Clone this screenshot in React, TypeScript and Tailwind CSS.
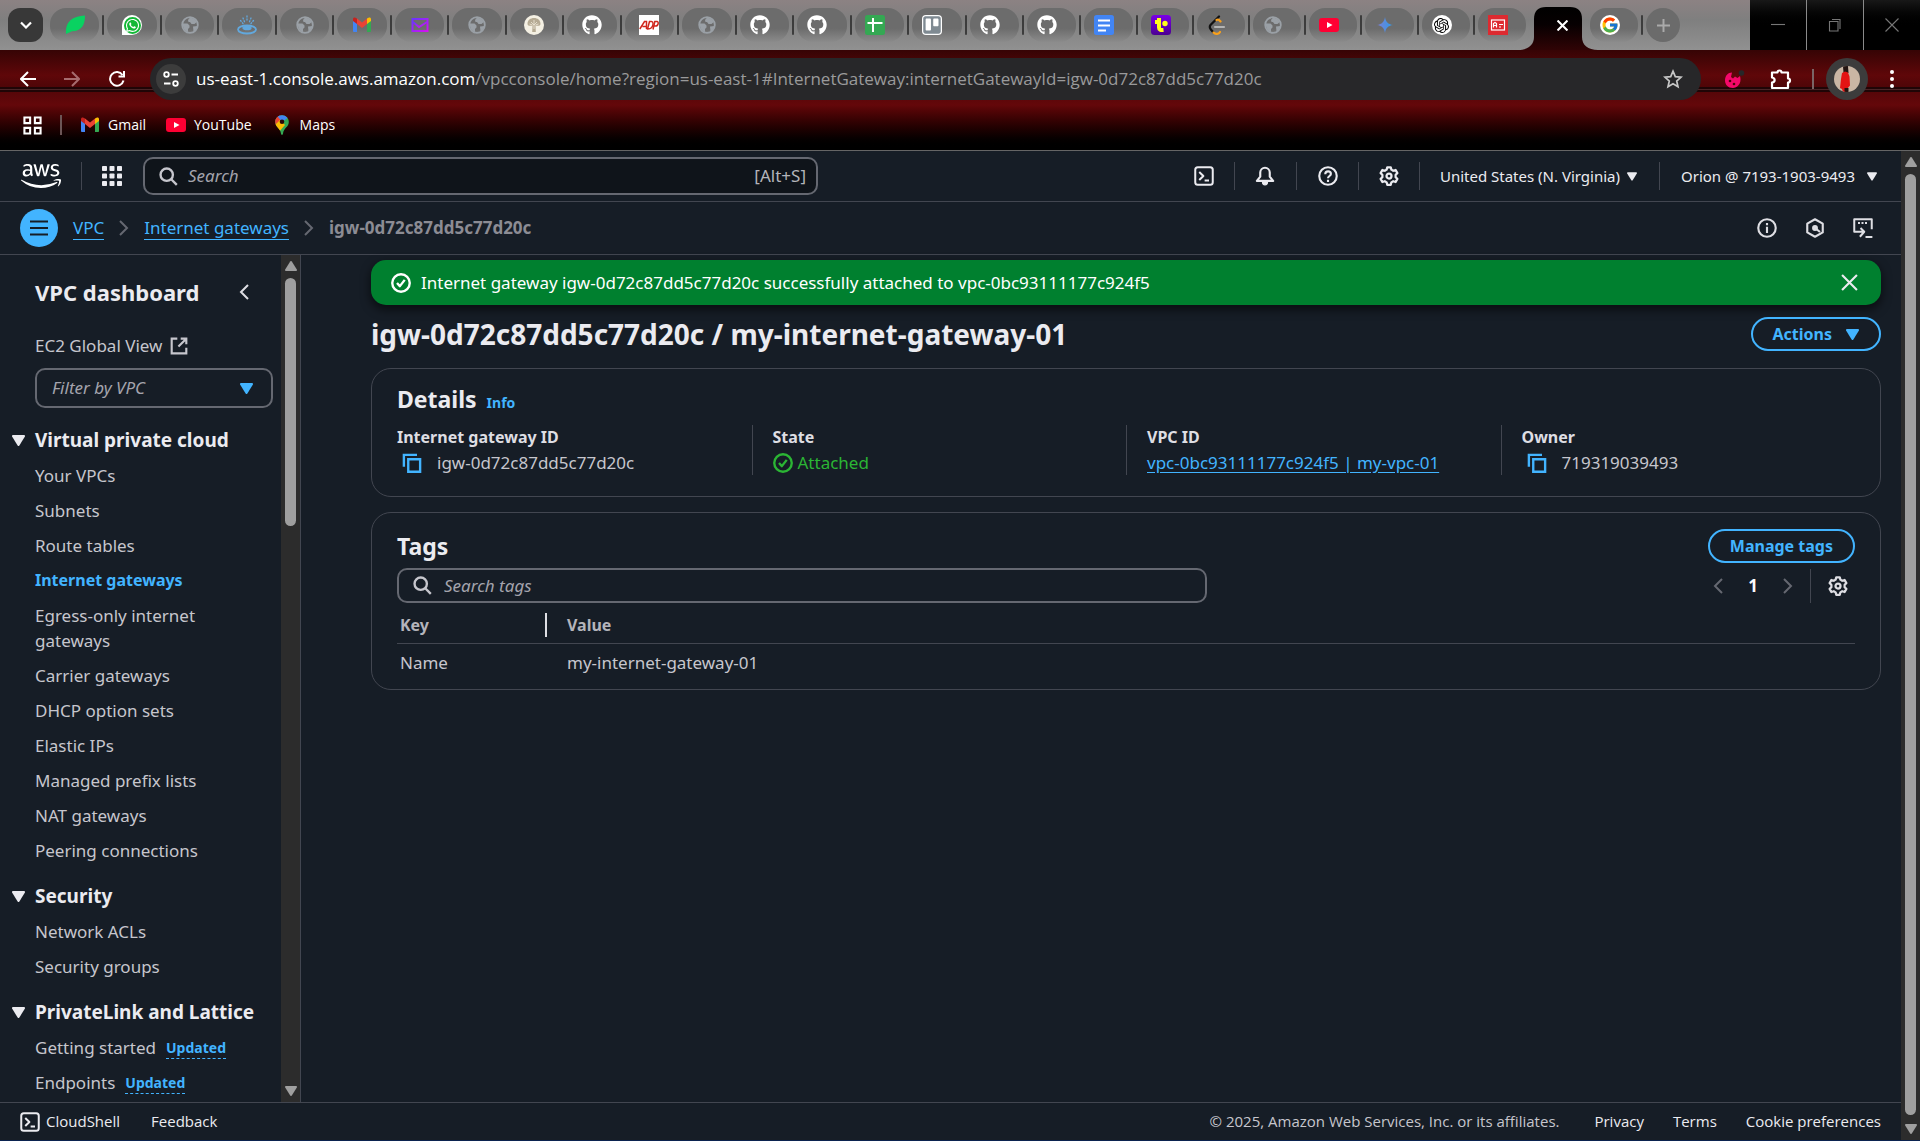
import React from "react";
import { FaGithub, FaWhatsapp, FaAws, FaTrello } from "react-icons/fa";
import { FcGoogle } from "react-icons/fc";
import { SiOpenai } from "react-icons/si";

type IconProps = { className?: string };

/* ---------- favicons ---------- */

const Globe = () => (
  <svg viewBox="0 0 20 20" className="size-5">
    <circle cx="10" cy="10" r="7.8" fill="none" stroke="#9aa0a6" strokeWidth="1.8" />
    <path d="M3 8.5h4.5l2 2v2l-1.500 1.500v3C5 16.500 2.500 13 3 8.500zM10 2.500c3 .2 5.500 1.800 6.800 4.500l-2.300 2h-3l-1.500-2H8.500L8 5z" fill="#9aa0a6" />
    <path d="M13 11.500l4.500-.5c-.4 2.800-2 4.800-4 5.800z" fill="#9aa0a6" />
  </svg>
);
const Leaf = () => (
  <svg viewBox="0 0 20 20" className="size-5">
    <path d="M1 19C.5 9 4 1.500 20 .5c0 9-3 15.500-13 15.800L1 19z" fill="#09d261" />
  </svg>
);
const WhatsApp = () => (
  <span className="flex size-5 items-center justify-center rounded-full rounded-bl-sm bg-white">
    <span className="flex size-[17px] items-center justify-center rounded-full bg-[#12b836]">
      <FaWhatsapp className="size-[15px] text-white" />
    </span>
  </span>
);
const Java = () => (
  <svg viewBox="0 0 20 20" className="size-5" fill="none" stroke="#62a8dd" strokeWidth="1.300" strokeLinecap="round">
    <path d="M10 1v6M6 3l2 5M14 3l-2 5M3.500 5.500L6 8.500M16.500 5.500L14 8.500" strokeDasharray="1 2" />
    <ellipse cx="10" cy="14.500" rx="9" ry="4" strokeWidth="1.800" />
    <ellipse cx="10" cy="13" rx="4" ry="1.700" fill="#62a8dd" />
  </svg>
);
const Gmail = ({ className = "size-5" }: IconProps) => (
  <svg viewBox="0 0 20 20" className={className}>
    <path d="M1 17V5l4 3v9H2.200C1.500 17 1 16.600 1 17z" fill="#4285f4" />
    <path d="M19 17V5l-4 3v9h3c.6 0 1-.4 1 0z" fill="#34a853" />
    <path d="M15 3.500l2-1c1-.3 2 .3 2 1.500v2l-4 3z" fill="#fbbc04" />
    <path d="M5 3.500l5 4 5-4V9l-5 4-5-4z" fill="#ea4335" />
    <path d="M1 6V4c0-1.200 1-1.800 2-1.500l2 1V9z" fill="#c5221f" />
  </svg>
);
const PurpleMail = () => (
  <svg viewBox="0 0 20 20" className="size-5" fill="none">
    <defs>
      <linearGradient id="pm" x1="0" y1="0" x2="1" y2="1">
        <stop offset="0" stopColor="#6a35ff" />
        <stop offset="1" stopColor="#d411f0" />
      </linearGradient>
    </defs>
    <rect x="2.500" y="4" width="15" height="12" stroke="url(#pm)" strokeWidth="2" />
    <path d="M3 7l6 5 8-5" stroke="url(#pm)" strokeWidth="2" />
  </svg>
);
const Tree = () => (
  <svg viewBox="0 0 20 20" className="size-5">
    <circle cx="10" cy="10" r="10" fill="#f4f0e3" />
    <path d="M3.500 9c0-4 3-6 6.500-6s6.500 2 6.500 6c0 2-3 2-5 1.500l.3 6.500H8.200l.3-6.500C6.500 11 3.500 11 3.500 9z" fill="#b5aa93" />
    <path d="M10 5v9M7 7l3 3 3-3M5.500 9l3 1M14.500 9l-3 1" stroke="#efe9d8" strokeWidth=".8" fill="none" />
  </svg>
);
const GitHub = () => <FaGithub className="size-5 text-white" />;
const Adp = () => (
  <svg viewBox="0 0 20 20" className="size-5">
    <rect width="20" height="20" fill="#fff" />
    <g fill="none" stroke="#d0271d" strokeWidth="1.500">
      <path d="M.8 14L5.500 6.500h2V14M3.500 11.500h4" />
      <path d="M8.500 14L10.500 6.500h2c2 0 2 3.500.5 5.500-.7 1.300-1.800 2-4.500 2z" />
      <path d="M14 14.500L15.800 6.500h2.200c2 0 1.500 4.500-1.500 4.500h-2" />
    </g>
  </svg>
);
const Sheets = () => (
  <svg viewBox="0 0 20 20" className="size-5">
    <rect width="20" height="20" rx="2.500" fill="#34a853" />
    <path d="M8 3v14M2.500 8h15" stroke="#fff" strokeWidth="2" />
  </svg>
);
const Trello = () => <FaTrello className="size-5 rounded-sm bg-white text-[#7f8a92]" />;
const Docs = () => (
  <svg viewBox="0 0 20 20" className="size-5">
    <rect width="20" height="20" rx="2.500" fill="#4285f4" />
    <path d="M4 5.500h12M4 10.500h12M4 15.500h8" stroke="#fff" strokeWidth="2.200" />
  </svg>
);
const TPurple = () => (
  <svg viewBox="0 0 20 20" className="size-5">
    <defs>
      <linearGradient id="tp" x1="0" y1="0" x2="0" y2="1">
        <stop offset="0" stopColor="#7a00e6" />
        <stop offset="1" stopColor="#4b0092" />
      </linearGradient>
    </defs>
    <rect width="20" height="20" rx="3.500" fill="url(#tp)" />
    <path d="M8 3v9.500c0 2.300 1.500 2.800 4.500 2.500M4 7h6" stroke="#ffff19" strokeWidth="4" fill="none" />
    <circle cx="14" cy="8.500" r="2.700" fill="#ffff19" />
  </svg>
);
const LeetCode = () => (
  <svg viewBox="0 0 20 20" className="size-5" fill="none" strokeLinecap="round" strokeWidth="2.200">
    <path d="M12 1.500L3.500 10c-1 1.300-1 2.500 0 4L6 17" stroke="#111" />
    <path d="M6.500 17.500c2 2 5 2 6.500-.5M9.500 5c1.500-.8 2.800 0 4 1.500" stroke="#f9a01b" />
    <path d="M8 12h9" stroke="#b3b3b3" />
  </svg>
);
const YouTube = () => (
  <svg viewBox="0 0 20 20" className="size-5">
    <rect y="3" width="20" height="14" rx="3" fill="#ff0033" />
    <path d="M8 7l5.500 3L8 13z" fill="#fff" />
  </svg>
);
const Gemini = () => (
  <svg viewBox="0 0 20 20" className="size-5">
    <defs>
      <linearGradient id="gm" x1="0" y1="0" x2="1" y2="0">
        <stop offset="0" stopColor="#7b7fd6" />
        <stop offset="1" stopColor="#2f9be8" />
      </linearGradient>
    </defs>
    <path d="M10 2c.8 5 3 7.200 8 8-5 .8-7.200 3-8 8-.8-5-3-7.200-8-8 5-.8 7.200-3 8-8z" fill="url(#gm)" />
  </svg>
);
const OpenAI = () => (
  <span className="flex size-5 items-center justify-center rounded-full bg-white">
    <SiOpenai className="size-[15px] text-black" />
  </span>
);
const RedCard = () => (
  <svg viewBox="0 0 20 20" className="size-5" fill="none" stroke="#fff" strokeWidth="1.200">
    <rect width="20" height="20" fill="#dd2a30" stroke="none" />
    <rect x="3.500" y="5" width="13" height="10" />
    <path d="M5.500 12.500v-4l1.500-1 1.500 1v4M5.500 10.500h3M11 9.500h4M11 12h2" />
  </svg>
);
const Google = () => (
  <span className="flex size-5 items-center justify-center rounded-full bg-white">
    <FcGoogle className="size-[18px]" />
  </span>
);

const centredTabs = [
  ["Leaf", Leaf], ["WhatsApp", WhatsApp], ["Site", Globe], ["Java", Java], ["Site", Globe], ["Gmail", Gmail],
  ["Mail", PurpleMail], ["Site", Globe], ["Tree", Tree], ["GitHub", GitHub], ["ADP", Adp], ["Site", Globe],
] as const;
const leftTabs = [
  ["GitHub", GitHub], ["GitHub", GitHub], ["Sheets", Sheets], ["Trello", Trello], ["GitHub", GitHub], ["GitHub", GitHub],
] as const;
const narrowTabs = [
  ["Docs", Docs], ["T", TPurple], ["LeetCode", LeetCode], ["Site", Globe], ["YouTube", YouTube], ["Gemini", Gemini],
  ["ChatGPT", OpenAI], ["Card", RedCard],
] as const;

/* ---------- interface icons ---------- */

const Stroke = ({ className = "size-5", width = 2, children }: IconProps & { width?: number; children: React.ReactNode }) => (
  <svg viewBox="0 0 16 16" className={className} fill="none" stroke="currentColor" strokeWidth={width} strokeLinejoin="round">
    {children}
  </svg>
);
const SearchIcon = ({ className }: IconProps) => (
  <Stroke className={className}>
    <circle cx="6.500" cy="6.500" r="5.200" />
    <path d="M10.300 10.300L15 15" />
  </Stroke>
);
const ShellIcon = ({ className }: IconProps) => (
  <Stroke className={className} width={1.6}>
    <rect x="1" y="1" width="14" height="14" rx="2" />
    <path d="M4.200 4.800L7.500 8l-3.300 3.200M8.500 11.500H12" />
  </Stroke>
);
const BellIcon = () => (
  <Stroke width={1.7}>
    <path d="M4.200 8.500V5.200a3.800 3.800 0 0 1 7.600 0v3.300l2.700 3.400h-13z" />
    <path d="M6 13h4c0 1.500-.8 2-2 2s-2-.5-2-2z" fill="currentColor" strokeWidth="1" />
  </Stroke>
);
const HelpIcon = () => (
  <Stroke width={1.7}>
    <circle cx="8" cy="8" r="7" />
    <path d="M5.800 6.500c0-3 4.500-2.800 4.500-.2C10.300 8 8 8 8 9.800M8 11v1.700" />
  </Stroke>
);
const GearIcon = () => (
  <Stroke width={1.8}>
    <path d="M6.600 1h2.800l.5 1.900 1.500.9 1.900-.6 1.400 2.500L13.300 7v2l1.400 1.300-1.400 2.500-1.900-.6-1.500.9-.5 1.900H6.600l-.5-1.900-1.500-.9-1.900.6-1.400-2.500L2.700 9V7L1.300 5.700l1.400-2.500 1.900.6 1.500-.9z" />
    <circle cx="8" cy="8" r="2" />
  </Stroke>
);
const InfoIcon = () => (
  <Stroke width={1.7}>
    <circle cx="8" cy="8" r="7" />
    <path d="M8 7v5M8 4v1.700" />
  </Stroke>
);
const HexIcon = () => (
  <Stroke width={1.7}>
    <path d="M8 1l6.200 3.500v7L8 15l-6.200-3.500v-7z" />
    <circle cx="8" cy="8" r="1.500" fill="currentColor" />
    <path d="M8 8l4 3.200" />
  </Stroke>
);
const TerminalIcon = () => (
  <Stroke width={1.6}>
    <path d="M5 11H1V1h14v8M10 15.200h5.500M4 11h4M6 8l3 3-3.500 4" />
    <path d="M4 4h8" strokeDasharray="1.600 1.200" />
  </Stroke>
);
const CheckCircle = () => (
  <Stroke width={1.9}>
    <circle cx="8" cy="8" r="7" />
    <path d="M4.800 8l2.300 2.500L11 5.500" />
  </Stroke>
);
const CopyIcon = () => (
  <Stroke className="size-5 text-[#42b4ff]" width={1.9}>
    <path d="M1.500 11V1.500H12" strokeLinejoin="miter" />
    <path d="M5 5h9.500v10H5z" strokeLinejoin="miter" />
  </Stroke>
);
const ChevronRight = ({ className = "" }: IconProps) => (
  <svg viewBox="0 0 10 16" className={`h-4 w-[10px] shrink-0 ${className}`} fill="none" stroke="currentColor" strokeWidth="2">
    <path d="M1 1l7 7-7 7" />
  </svg>
);
const ChevronLeft = ({ className = "" }: IconProps) => (
  <svg viewBox="0 0 10 16" className={`h-4 w-[10px] shrink-0 ${className}`} fill="none" stroke="currentColor" strokeWidth="2">
    <path d="M9 1L2 8l7 7" />
  </svg>
);
const Caret = ({ className = "h-[10px] w-3" }: IconProps) => (
  <svg viewBox="0 0 12 10" className={`shrink-0 ${className}`} fill="currentColor">
    <path d="M1 0h10a1 1 0 0 1 .8 1.500L6.800 9.500a1 1 0 0 1-1.600 0L.2 1.500A1 1 0 0 1 1 0z" />
  </svg>
);

/* ---------- browser frame ---------- */

const tabShape =
  "flex h-[34px] min-w-0 flex-1 items-center rounded-2xl bg-linear-to-b from-[#6c6c6c] from-60% to-[#8b8b8b]";

const Tab = ({ name, centred, last, children }: { name: string; centred?: boolean; last?: boolean; children: React.ReactNode }) => (
  <div className="flex min-w-0 flex-1 items-center">
    <button aria-label={name} className={`${tabShape} ${centred ? "justify-center" : "pl-[10px]"}`}>
      {children}
    </button>
    <span className={`mx-[3px] h-5 w-[2px] rounded-full ${last ? "bg-transparent" : "bg-[#3c3c3c]"}`} />
  </div>
);

const TabStrip = () => (
  <div className="flex h-[50px] bg-linear-to-b from-[#8c8283] via-[#7f7f7f] via-40% to-[#919191]">
    <div className="flex min-w-0 flex-1 items-center pl-2">
      <button aria-label="Search tabs" className="mr-[7px] flex h-[34px] w-[35px] shrink-0 items-center justify-center rounded-xl bg-[#383838]">
        <svg viewBox="0 0 12 8" className="h-2 w-3" fill="none" stroke="#fff" strokeWidth="2.200">
          <path d="M1 1.500l5 5 5-5" />
        </svg>
      </button>
      <div className="flex min-w-0 flex-[23]">
        {centredTabs.map(([name, Icon], i) => (
          <Tab key={i} name={name} centred>
            <Icon />
          </Tab>
        ))}
        {leftTabs.map(([name, Icon], i) => (
          <Tab key={i} name={name}>
            <Icon />
          </Tab>
        ))}
      </div>
      <div className="flex min-w-0 flex-[10]">
        {narrowTabs.map(([name, Icon], i) => (
          <Tab key={i} name={name} last={i === narrowTabs.length - 1}>
            <Icon />
          </Tab>
        ))}
      </div>
    </div>
    <div className="relative flex h-[50px] w-12 items-end pt-[7px]">
      <svg viewBox="0 0 80 43" className="absolute bottom-0 -left-4 h-[43px] w-20">
        <defs>
          <linearGradient id="at" x1="0" y1="0" x2="0" y2="1">
            <stop offset="0" stopColor="#000" />
            <stop offset=".4" stopColor="#060001" />
            <stop offset="1" stopColor="#300305" />
          </linearGradient>
        </defs>
        <path d="M0 43c10 0 16-5 16-13V12C16 4 20 0 28 0h24c8 0 12 4 12 12v18c0 8 6 13 16 13z" fill="url(#at)" />
      </svg>
      <button aria-label="Close tab" className="relative mb-[19px] ml-[23px]">
        <svg viewBox="0 0 10 10" className="size-[11px]" stroke="#fff" strokeWidth="1.900">
          <path d="M.5.5l9 9M9.500.5l-9 9" />
        </svg>
      </button>
    </div>
    <div className="flex items-center pl-2">
      <div className="flex w-14 items-center">
        <button aria-label="Google" className={`${tabShape} pl-[10px]`}>
          <Google />
        </button>
        <span className="mx-[3px] h-5 w-[2px] rounded-full bg-[#3c3c3c]" />
      </div>
      <button aria-label="New tab" className="flex size-[34px] items-center justify-center rounded-full bg-[#6b6b6b]">
        <svg viewBox="0 0 12 12" className="size-[13px]" stroke="#aaa" strokeWidth="1.800">
          <path d="M6 0v12M0 6h12" />
        </svg>
      </button>
    </div>
    <div className="ml-[70px] flex gap-px bg-[#8a8a8a] text-[#777]">
      {[
        ["Minimize", "M0 6.500h14"],
        ["Restore", "M1.500 3.500h8.500v9.500H1.500zM4 1.500h8v9.500"],
        ["Close", "M.5.5l13 13M13.500.5l-13 13"],
      ].map(([name, d]) => (
        <button key={name} aria-label={name} className="flex h-[50px] w-14 items-center justify-center bg-linear-to-b from-[#181818] to-black to-60%">
          <svg viewBox="0 0 14 14" className="size-[14px]" fill="none" stroke="currentColor" strokeWidth="1.100">
            <path d={d} />
          </svg>
        </button>
      ))}
    </div>
  </div>
);

const Toolbar = () => (
  <div className="relative h-[100px] bg-linear-to-b from-[#2d0405] via-[#64070a] via-55% to-black px-3 font-['Open_Sans','Noto_Sans',sans-serif] text-white">
    <div className="absolute inset-x-0 top-0 h-[42px] bg-linear-to-b from-[#360405] via-[#5f0709] via-60% to-[#480507]">
      <div className="absolute inset-x-0 bottom-0 h-[5px] border-y-2 border-[#1f0506] bg-[#4a2426]" />
    </div>
    <div className="relative flex h-[42px] items-center pt-4 pr-[11px]">
      <button aria-label="Back" className="flex w-8 justify-center">
        <svg viewBox="0 0 16 16" className="size-4" fill="none" stroke="currentColor" strokeWidth="2">
          <path d="M16 8H1.500M8 1L1 8l7 7" />
        </svg>
      </button>
      <button aria-label="Forward" className="ml-3 flex w-8 justify-center text-[#a66c6e]">
        <svg viewBox="0 0 16 16" className="size-4" fill="none" stroke="currentColor" strokeWidth="2">
          <path d="M0 8h14.500M8 1l7 7-7 7" />
        </svg>
      </button>
      <button aria-label="Reload" className="ml-[13px] flex w-8 justify-center">
        <svg viewBox="0 0 16 16" className="size-4" fill="none" stroke="currentColor" strokeWidth="2">
          <path d="M14.500 9.500A6.800 6.800 0 1 1 13.500 4M15 0v5.500H9.500" />
        </svg>
      </button>
      <div className="ml-[17px] flex h-[42px] min-w-0 flex-1 items-center rounded-full bg-[#272729] pr-[18px] pl-[6px]">
        <button aria-label="Site information" className="flex size-[30px] shrink-0 items-center justify-center rounded-full bg-[#3c3c3c]">
          <svg viewBox="0 0 16 16" className="size-4" fill="none" stroke="currentColor" strokeWidth="1.800">
            <circle cx="3.500" cy="3.500" r="2.300" />
            <path d="M8.500 3.500H15M1 12.500h6.500" />
            <circle cx="12.500" cy="12.500" r="2.300" />
          </svg>
        </button>
        <p className="ml-[10px] min-w-0 flex-1 truncate text-[17px] text-[#9a9a9b]">
          <span className="text-white">us-east-1.console.aws.amazon.com</span>
          /vpcconsole/home?region=us-east-1#InternetGateway:internetGatewayId=igw-0d72c87dd5c77d20c
        </p>
        <button aria-label="Bookmark" className="text-[#c7c7c7]">
          <svg viewBox="0 0 20 20" className="size-5" fill="none" stroke="currentColor" strokeWidth="1.700">
            <path d="M10 2.200l2.300 5.400 5.800.5-4.400 3.900 1.300 5.700-5-3-5 3 1.300-5.700L1.900 8.100l5.800-.5z" />
          </svg>
        </button>
      </div>
      <button aria-label="Cookie extension" className="ml-[22px]">
        <svg viewBox="0 0 22 22" className="size-[22px]">
          <path d="M9 4.500L8 9l2 1.500 2-2 2.500 1.500L17 8c1.500 5 0 11-7 12-5 0-8-3.500-8-7.500C2 7.500 5 4.500 9 4.500z" fill="#f5086a" />
          <circle cx="7" cy="13" r="1.300" fill="#4b0508" />
          <circle cx="11" cy="16" r="1.300" fill="#4b0508" />
          <circle cx="18.500" cy="5" r="2.800" fill="#272729" />
        </svg>
      </button>
      <button aria-label="Extensions" className="ml-[25px]">
        <svg viewBox="0 0 22 22" className="size-[22px]" fill="none" stroke="#fff" strokeWidth="2.200" strokeLinejoin="round">
          <path d="M2 4.500h5.500a2 2 0 0 1 4 0H18v6a2 2 0 0 1 0 4V20H2v-5.500c3.500-.5 3.500-4.500 0-5z" />
        </svg>
      </button>
      <span className="ml-5 h-5 w-[2px] bg-[#7a6566]" />
      <button aria-label="Profile" className="ml-3 flex size-[42px] items-center justify-center rounded-full bg-[#3c3c3c]">
        <svg viewBox="0 0 26 26" className="size-[26px]">
          <defs>
            <clipPath id="av"><circle cx="13" cy="13" r="13" /></clipPath>
          </defs>
          <g clipPath="url(#av)">
            <rect width="26" height="26" fill="#c9b6a4" />
            <path d="M9 0h5l.5 7h-5z" fill="#231512" />
            <path d="M8 7l3-1.500 3 1 1.500 4 .5 9-3 3.500 1 3H9l-1-3-2-1 1-9z" fill="#e31414" />
            <path d="M10.500 22h4v4h-4z" fill="#231512" />
          </g>
        </svg>
      </button>
      <button aria-label="Menu" className="ml-[19px] flex w-[10px] justify-center">
        <svg viewBox="0 0 4 18" className="h-[18px] w-1" fill="#fff">
          <circle cx="2" cy="2" r="2" /><circle cx="2" cy="9" r="2" /><circle cx="2" cy="16" r="2" />
        </svg>
      </button>
    </div>
    <div className="relative mt-2 flex h-[50px] items-center pl-[11px] text-sm">
      <button aria-label="Apps">
        <svg viewBox="0 0 20 20" className="size-[19px]" fill="none" stroke="#fff" strokeWidth="2.200">
          <path d="M1.500 1.500h6v6h-6zM12.500 1.500h6v6h-6zM1.500 12.500h6v6h-6zM12.500 12.500h6v6h-6z" />
        </svg>
      </button>
      <span className="ml-[18px] h-5 w-[2px] bg-[#6c5556]" />
      <a href="#gmail" className="ml-[18px] flex items-center gap-2"><Gmail />Gmail</a>
      <a href="#youtube" className="ml-5 flex items-center gap-2"><YouTube />YouTube</a>
      <a href="#maps" className="ml-5 flex items-center gap-2">
        <svg viewBox="0 0 20 20" className="size-5">
          <defs>
            <clipPath id="pin"><path d="M10 .3c4 0 6.800 3 6.800 6.600 0 5-5.300 6-5.800 11.800 0 1.300-2 1.300-2 0C8.500 13 3.200 11.900 3.200 6.900 3.200 3.300 6 .3 10 .3z" /></clipPath>
          </defs>
          <g clipPath="url(#pin)">
            <rect width="20" height="20" fill="#34a853" />
            <path d="M0 12L11 4l-3-4H0z" fill="#ea4335" />
            <path d="M5 0h15L10 7 6 2z" fill="#4285f4" />
            <path d="M2 11l6-6 5 5-7 8z" fill="#fbbc04" />
          </g>
          <circle cx="10" cy="6.800" r="2.300" fill="#2a0506" />
        </svg>
        Maps
      </a>
    </div>
  </div>
);

/* ---------- console ---------- */

const Divider = ({ className = "" }: IconProps) => <span className={`h-7 w-px bg-[#424650] ${className}`} />;

const AwsHeader = () => (
  <header className="flex h-[51px] items-center border-b border-[#424650] pr-6 pl-[21px] text-[#ebebf0]">
    <a href="#home" aria-label="AWS home" className="flex w-10 justify-center overflow-hidden text-white">
      <FaAws className="size-10" />
    </a>
    <Divider className="ml-5 w-[2px]" />
    <button aria-label="Services" className="ml-5">
      <svg viewBox="0 0 20 20" className="size-5" fill="currentColor">
        {[0, 7.5, 15].map((y) => [0, 7.5, 15].map((x) => <rect key={`${x}-${y}`} x={x} y={y} width="5" height="5" rx=".8" />))}
      </svg>
    </button>
    <label className="ml-[21px] flex h-[38px] w-[675px] items-center rounded-[10px] border-2 border-[#656871] bg-[#0f141a] pr-[10px] pl-[14px] text-[#b4b4bb]">
      <SearchIcon className="size-[19px] text-[#c6c6cd]" />
      <input aria-label="Search" placeholder="Search" className="ml-[10px] min-w-0 flex-1 bg-transparent outline-none placeholder:text-[#a4a4ad] placeholder:italic" />
      <span>[Alt+S]</span>
    </label>
    <div className="ml-auto flex items-center">
      <button aria-label="CloudShell"><ShellIcon className="size-5" /></button>
      <Divider className="mx-5" />
      <button aria-label="Notifications"><BellIcon /></button>
      <Divider className="mx-[21px]" />
      <button aria-label="Help"><HelpIcon /></button>
      <Divider className="mx-5" />
      <button aria-label="Settings"><GearIcon /></button>
      <Divider className="mx-5" />
      <button className="flex items-center gap-[7px] text-[15px]">United States (N. Virginia)<Caret className="h-[9px] w-[10px]" /></button>
      <Divider className="mr-[21px] ml-[22px]" />
      <button className="flex items-center gap-3 text-[15px]">Orion @ 7193-1903-9493<Caret className="h-[9px] w-[10px]" /></button>
    </div>
  </header>
);

const Breadcrumbs = () => (
  <div className="flex h-[53px] items-center border-b border-[#424650] pr-7 pl-5">
    <button aria-label="Open navigation" className="flex size-[38px] items-center justify-center rounded-full bg-[#42b4ff]">
      <svg viewBox="0 0 18 16" className="h-4 w-[18px]" stroke="#161d26" strokeWidth="2.200">
        <path d="M0 1.500h18M0 8h18M0 14.500h18" />
      </svg>
    </button>
    <nav aria-label="Breadcrumbs" className="ml-[15px] flex items-center gap-[15px]">
      <a href="#vpc" className="border-b border-[#42b4ff] leading-[22px] text-[#42b4ff]">VPC</a>
      <ChevronRight className="text-[#656871]" />
      <a href="#igws" className="border-b border-[#42b4ff] leading-[22px] text-[#42b4ff]">Internet gateways</a>
      <ChevronRight className="text-[#656871]" />
      <span className="font-bold text-[#8c8c94]">igw-0d72c87dd5c77d20c</span>
    </nav>
    <div className="ml-auto flex items-center gap-7 text-[#dedee3]">
      <button aria-label="Info"><InfoIcon /></button>
      <button aria-label="Amazon Q"><HexIcon /></button>
      <button aria-label="Open terminal"><TerminalIcon /></button>
    </div>
  </div>
);

const sections = [
  {
    title: "Virtual private cloud",
    items: ["Your VPCs", "Subnets", "Route tables", "Internet gateways", "Egress-only internet gateways", "Carrier gateways", "DHCP option sets", "Elastic IPs", "Managed prefix lists", "NAT gateways", "Peering connections"],
  },
  { title: "Security", items: ["Network ACLs", "Security groups"] },
  { title: "PrivateLink and Lattice", items: ["Getting started", "Endpoints"], updated: true },
];

const ScrollArrow = ({ up }: { up?: boolean }) => (
  <svg viewBox="0 0 12 10" className={`h-[10px] w-3 shrink-0 ${up ? "rotate-180" : ""}`} fill="#9f9f9f">
    <path d="M1 0h10a1 1 0 0 1 .8 1.500L6.800 9.500a1 1 0 0 1-1.600 0L.2 1.500A1 1 0 0 1 1 0z" />
  </svg>
);

const Sidebar = () => (
  <aside className="flex w-[301px] shrink-0 border-r border-[#424650]">
    <div className="min-w-0 flex-1 overflow-hidden pr-2 text-[#c6c6cd]">
      <div className="flex h-[74px] items-center justify-between pr-6 pl-[35px]">
        <h2 className="text-[22px] font-bold text-[#ebebf0]">VPC dashboard</h2>
        <button aria-label="Close navigation"><ChevronLeft className="text-[#dedee3]" /></button>
      </div>
      <a href="#ec2" className="mt-1 flex h-[25px] items-center gap-2 pl-[35px]">
        EC2 Global View
        <Stroke className="size-[18px]" width={1.9}>
          <path d="M6.500 1.500h-5v13h13v-5M9.500 1.500h5v5M14.500 1.500L7.500 8.500" strokeLinejoin="miter" />
        </Stroke>
      </a>
      <div className="relative mt-[10px] ml-[35px] h-10 w-[238px]">
        <select aria-label="Filter by VPC" className="size-full appearance-none rounded-[10px] border-2 border-[#656871] bg-[#161d26] pl-[15px] text-[#a4a4ad] italic">
          <option>Filter by VPC</option>
        </select>
        <Caret className="pointer-events-none absolute top-[15px] right-5 h-[11px] w-[13px] text-[#42b4ff]" />
      </div>
      <div className="mt-5 flex flex-col gap-[21px]">
        {sections.map((s) => (
          <section key={s.title}>
            <button className="flex h-[25px] items-center text-[19px] font-bold text-[#ebebf0]">
              <Caret className="mr-[10px] ml-3 h-[11px] w-[13px]" />
              {s.title}
            </button>
            <ul className="mt-[10px] flex flex-col gap-[10px] pl-[35px]">
              {s.items.map((it) => (
                <li key={it} className="flex items-center leading-[25px]">
                  <a href="#nav" className={it === "Internet gateways" ? "text-base leading-[25px] font-bold text-[#42b4ff]" : ""}>{it}</a>
                  {s.updated && (
                    <button className="ml-[10px] border-b border-dashed border-[#42b4ff] text-sm leading-[21px] font-bold text-[#42b4ff]">Updated</button>
                  )}
                </li>
              ))}
            </ul>
          </section>
        ))}
      </div>
    </div>
    <div className="flex w-[19px] shrink-0 flex-col items-center bg-[#2c2c2c] py-[6px]">
      <ScrollArrow up />
      <div className="mt-[7px] h-[248px] w-[11px] rounded-full bg-[#9f9f9f]" />
      <div className="flex-1" />
      <ScrollArrow />
    </div>
  </aside>
);

const Field = ({ label, first, children }: { label: string; first?: boolean; children: React.ReactNode }) => (
  <div className={first ? "" : "-ml-5 border-l border-[#424650] pl-5"}>
    <dt className="text-base leading-[25px] font-bold text-[#dedee3]">{label}</dt>
    <dd className="flex items-center">{children}</dd>
  </div>
);

const pill = "flex h-[34px] items-center rounded-full border-2 border-[#42b4ff] text-base font-bold text-[#42b4ff]";

const Main = () => (
  <main className="min-w-0 flex-1 pt-[5px] pr-5 pl-[70px]">
    <div role="status" className="flex h-[45px] items-center rounded-[15px] bg-[#00802f] pr-[23px] pl-5 text-white shadow-[0_4px_10px_1px_#0008]">
      <CheckCircle />
      <span className="ml-[10px]">Internet gateway igw-0d72c87dd5c77d20c successfully attached to vpc-0bc93111177c924f5</span>
      <button aria-label="Dismiss" className="ml-auto text-[#ebebf0]">
        <Stroke className="size-[17px]"><path d="M1 1l14 14M15 1L1 15" /></Stroke>
      </button>
    </div>
    <div className="mt-[10px] flex h-[38px] items-center justify-between">
      <h1 className="text-[28px] font-bold text-[#ebebf0]">igw-0d72c87dd5c77d20c / my-internet-gateway-01</h1>
      <button className={`${pill} gap-[14px] px-5`}>Actions<Caret className="h-[11px] w-[13px]" /></button>
    </div>
    <section className="mt-[15px] rounded-[20px] border border-[#424650] px-[25px] pt-[15px] pb-[21px]">
      <div className="flex h-[31px] items-baseline gap-[10px]">
        <h2 className="text-[23px] leading-[31px] font-bold text-[#ebebf0]">Details</h2>
        <a href="#info" className="text-sm font-bold text-[#42b4ff]">Info</a>
      </div>
      <dl className="mt-[10px] grid grid-cols-4 gap-10 leading-[25px] text-[#c6c6cd]">
        <Field label="Internet gateway ID" first>
          <button aria-label="Copy gateway ID" className="mr-[15px] ml-[5px]"><CopyIcon /></button>
          igw-0d72c87dd5c77d20c
        </Field>
        <Field label="State">
          <span className="flex items-center gap-[5px] text-[#2bb534]"><CheckCircle />Attached</span>
        </Field>
        <Field label="VPC ID">
          <a href="#vpc" className="text-[#42b4ff] underline underline-offset-[3px]">vpc-0bc93111177c924f5 | my-vpc-01</a>
        </Field>
        <Field label="Owner">
          <button aria-label="Copy owner" className="mr-[15px] ml-[5px]"><CopyIcon /></button>
          719319039493
        </Field>
      </dl>
    </section>
    <section className="mt-[15px] rounded-[20px] border border-[#424650] px-[25px] pt-4 pb-2">
      <div className="flex h-[34px] items-center justify-between">
        <h2 className="text-[23px] font-bold text-[#ebebf0]">Tags</h2>
        <button className={`${pill} px-5`}>Manage tags</button>
      </div>
      <div className="mt-[5px] flex h-[35px] items-center justify-between">
        <label className="flex h-[35px] w-[810px] items-center rounded-[10px] border-2 border-[#656871] px-[14px]">
          <SearchIcon className="size-[19px] text-[#c6c6cd]" />
          <input aria-label="Search tags" placeholder="Search tags" className="ml-3 min-w-0 flex-1 bg-transparent outline-none placeholder:text-[#a4a4ad] placeholder:italic" />
        </label>
        <div className="flex items-center pr-[7px]">
          <button aria-label="Previous page"><ChevronLeft className="text-[#656871]" /></button>
          <span className="mx-[25px] font-bold text-[#f9f9fa]">1</span>
          <button aria-label="Next page"><ChevronRight className="text-[#656871]" /></button>
          <span className="mr-[17px] ml-[17px] h-[34px] w-px bg-[#424650]" />
          <button aria-label="Table settings" className="text-[#dedee3]"><GearIcon /></button>
        </div>
      </div>
      <table className="w-full table-fixed border-collapse text-left">
        <colgroup>
          <col className="w-[150px]" />
          <col />
        </colgroup>
        <thead>
          <tr className="h-10 border-b border-[#424650] text-base text-[#b4b4bb]">
            <th className="p-0 pt-1 pl-[3px] font-bold">
              <span className="flex h-6 items-center border-r-2 border-[#dedee3]">Key</span>
            </th>
            <th className="p-0 pt-1 pl-5 font-bold">Value</th>
          </tr>
        </thead>
        <tbody>
          <tr className="h-[38px] text-[#c6c6cd]">
            <td className="p-0 pl-[3px]">Name</td>
            <td className="p-0 pl-5">my-internet-gateway-01</td>
          </tr>
        </tbody>
      </table>
    </section>
  </main>
);

const Footer = () => (
  <footer className="flex h-[38px] shrink-0 items-center border-t border-[#424650] pr-5 pl-5 font-['Open_Sans','Noto_Sans',sans-serif] text-[15px] text-[#ebebf0]">
    <button className="flex items-center gap-[6px]"><ShellIcon className="size-5" />CloudShell</button>
    <button className="ml-[31px]">Feedback</button>
    <span className="ml-auto text-[#c6c6cd]">© 2025, Amazon Web Services, Inc. or its affiliates.</span>
    <a href="#privacy" className="ml-[35px]">Privacy</a>
    <a href="#terms" className="ml-[29px]">Terms</a>
    <a href="#cookies" className="ml-[29px]">Cookie preferences</a>
  </footer>
);

export default function App() {
  return (
    <div className="flex h-screen flex-col overflow-hidden bg-[#161d26] font-['Noto_Sans','Open_Sans',sans-serif] text-[17px]">
      <TabStrip />
      <Toolbar />
      <div className="flex min-h-0 flex-1 border-t border-b border-t-[#656565] border-b-[#0b2350]">
        <div className="flex min-w-0 flex-1 flex-col">
          <AwsHeader />
          <Breadcrumbs />
          <div className="flex min-h-0 flex-1">
            <Sidebar />
            <Main />
          </div>
          <Footer />
        </div>
        <div className="flex w-[19px] shrink-0 flex-col items-center bg-[#2c2c2c] py-[6px]">
          <ScrollArrow up />
          <div className="mt-[7px] mb-[9px] w-[11px] flex-1 rounded-full bg-[#9f9f9f]" />
          <ScrollArrow />
        </div>
      </div>
    </div>
  );
}
